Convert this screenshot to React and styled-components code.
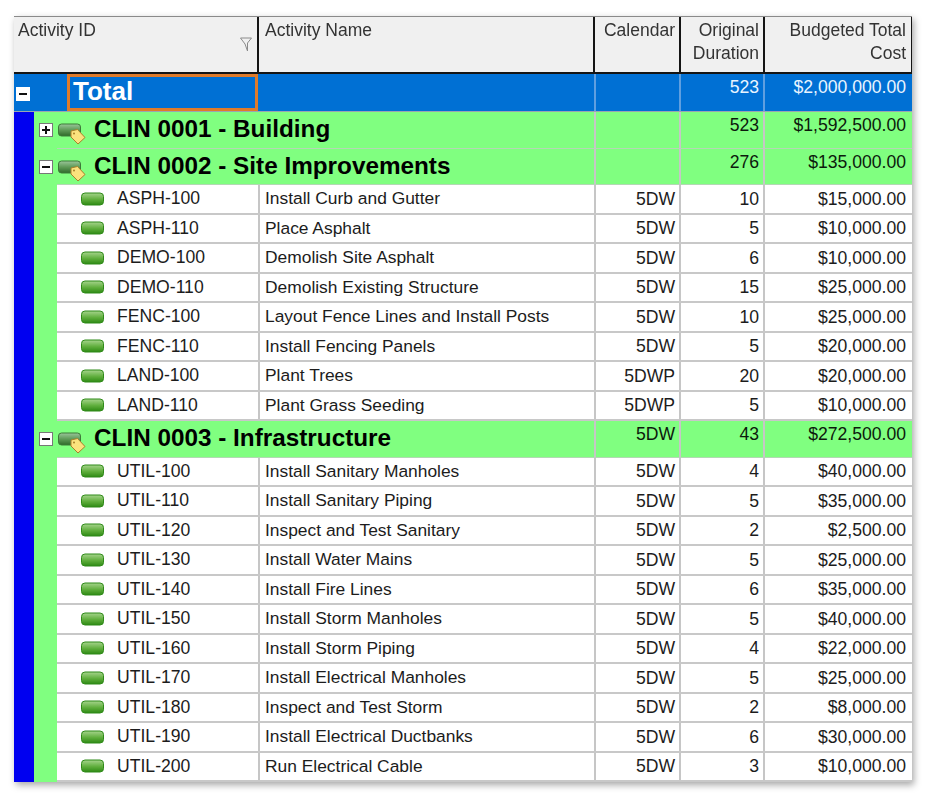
import styled, { createGlobalStyle } from "styled-components";

const GlobalStyle = createGlobalStyle`
  html, body {
    margin: 0;
    padding: 0;
    background: #ffffff;
  }
  body {
    font-family: "Liberation Sans", Arial, sans-serif;
    color: #1c1c1c;
  }
`;

const Page = styled.div`
  width: 928px;
  height: 793px;
  padding: 16px 16px 0 14px;
  box-sizing: border-box;
`;

const Panel = styled.div`
  width: 898px;
  background: #ffffff;
  box-shadow: 2px 3px 7px rgba(0, 0, 0, 0.35);
  filter: blur(0.3px);
`;

const HeaderRow = styled.div`
  display: grid;
  grid-template-columns: 245px 336px 86px 84px 1fr;
  height: 57.5px;
  background: #f0f0f0;
  border-top: 1px solid #8a8a8a;
  border-bottom: 2px solid #141414;
  box-sizing: border-box;
`;

const HeaderCell = styled.div`
  position: relative;
  padding: 2px 4px 0 ${(p) => p.$left || 4}px;
  font-size: 17.5px;
  line-height: 23px;
  color: #333333;
  text-align: ${(p) => (p.$right ? "right" : "left")};
  border-right: 2px solid #141414;
  box-sizing: border-box;
  white-space: nowrap;
  &:last-child {
    padding-right: 5px;
    border-right: 1px solid #141414;
  }
`;

const FilterMark = styled.svg`
  position: absolute;
  right: 5px;
  top: 20px;
`;

const TotalRowWrap = styled.div`
  display: grid;
  grid-template-columns: 580px 85px 84px 1fr;
  height: 38.5px;
  background: #0070d4;
  color: #e8f4ff;
  border-bottom: 1px solid #9aa6b0;
  box-sizing: border-box;
`;

const TotalName = styled.div`
  display: flex;
  align-items: center;
  padding-left: 2px;
`;

const TotalLabel = styled.div`
  width: 191px;
  height: 37px;
  margin-left: 37px;
  padding-left: 3px;
  border: 3px solid #e07b2a;
  box-sizing: border-box;
  font-size: 26px;
  font-weight: bold;
  line-height: 28px;
  color: #ffffff;
`;

const Toggle = styled.div`
  width: 14px;
  height: 14px;
  flex: none;
  position: relative;
  margin-top: ${(p) => p.$offset || 0}px;
  background: #ffffff;
  border: 1px solid ${(p) => (p.$plain ? "#777777" : "#ffffff")};
  box-sizing: border-box;
  &::before {
    content: "";
    position: absolute;
    left: 2px;
    right: 2px;
    top: 5px;
    height: 2px;
    background: #111111;
  }
  ${(p) =>
    p.$plus &&
    `&::after {
      content: "";
      position: absolute;
      top: 2px;
      bottom: 2px;
      left: 5px;
      width: 2px;
      background: #111111;
    }`}
`;

const NumCell = styled.div`
  font-size: 17.6px;
  text-align: right;
  padding: ${(p) => (p.$top ? "1px" : "0")} 4px 0 4px;
  border-left: 2px solid ${(p) => p.$line || "#c6c6c6"};
  box-sizing: border-box;
  display: ${(p) => (p.$top ? "block" : "flex")};
  align-items: center;
  justify-content: flex-end;
  line-height: 24px;
  white-space: nowrap;
  &:last-child {
    padding-right: 6px;
  }
`;

const Body = styled.div`
  border-left: 20px solid #0000f0;
`;

const Group = styled.div`
  background: #80ff80;
`;

const GroupRow = styled.div`
  display: grid;
  grid-template-columns: 560px 85px 84px 1fr;
  height: 36.5px;
  color: #0c1a0c;
`;

const GroupName = styled.div`
  position: relative;
  display: flex;
  align-items: flex-start;
  padding: 11px 0 0 5px;
  &::after {
    content: "";
    position: absolute;
    left: 23px;
    right: 0;
    bottom: 0;
    height: 1px;
    background: #b4d8b4;
  }
`;

const GroupLabel = styled.div`
  margin: -9px 0 0 8px;
  font-size: 24.3px;
  font-weight: bold;
  line-height: 30px;
  color: #000000;
  white-space: nowrap;
`;

const GroupCell = styled(NumCell)`
  border-bottom: 1px solid #b4d8b4;
`;

const ActivityRow = styled.div`
  display: grid;
  grid-template-columns: 201px 336px 85px 84px 1fr;
  height: 29.5px;
  margin-left: 23px;
  background: #ffffff;
  border-bottom: 2px solid #c8c8c8;
  box-sizing: border-box;
`;

const IdCell = styled.div`
  display: flex;
  align-items: center;
  padding-left: 24px;
  font-size: 17.6px;
`;

const IdText = styled.span`
  margin-left: 13px;
`;

const NameCell = styled.div`
  display: flex;
  align-items: center;
  padding-left: 5px;
  font-size: 17.4px;
  white-space: nowrap;
  border-left: 2px solid #c6c6c6;
  box-sizing: border-box;
`;

const GroupGlyph = styled.svg`
  flex: none;
  margin: -1px 0 0 5px;
`;

const ActivityGlyph = styled.svg`
  flex: none;
`;

function GroupIcon() {
  return (
    <GroupGlyph width="28" height="24" viewBox="0 0 28 24">
      <defs>
        <linearGradient id="groupBar" x1="0" y1="0" x2="0" y2="1">
          <stop offset="0" stopColor="#9bc59b" />
          <stop offset="0.5" stopColor="#5f9a58" />
          <stop offset="1" stopColor="#2f6a2a" />
        </linearGradient>
      </defs>
      <rect x="0.5" y="2" width="22" height="12" rx="3" fill="url(#groupBar)" stroke="#3d7a38" />
      <path d="M13 9 L19.5 7.5 L27 15.5 L20 22 L13 15 Z" fill="#fbe27d" stroke="#a8802a" strokeWidth="1" />
      <circle cx="16" cy="11.5" r="1" fill="#a8802a" />
    </GroupGlyph>
  );
}

function ActivityIcon() {
  return (
    <ActivityGlyph width="23" height="14" viewBox="0 0 23 14">
      <defs>
        <linearGradient id="activityBar" x1="0" y1="0" x2="0" y2="1">
          <stop offset="0" stopColor="#a6d48c" />
          <stop offset="0.55" stopColor="#5fae3c" />
          <stop offset="1" stopColor="#2e8a14" />
        </linearGradient>
      </defs>
      <rect x="0.5" y="1" width="22" height="12" rx="3.5" fill="url(#activityBar)" stroke="#2f8a18" />
    </ActivityGlyph>
  );
}

const site = [
  ["ASPH-100", "Install Curb and Gutter", "5DW", 10, "$15,000.00"],
  ["ASPH-110", "Place Asphalt", "5DW", 5, "$10,000.00"],
  ["DEMO-100", "Demolish Site Asphalt", "5DW", 6, "$10,000.00"],
  ["DEMO-110", "Demolish Existing Structure", "5DW", 15, "$25,000.00"],
  ["FENC-100", "Layout Fence Lines and Install Posts", "5DW", 10, "$25,000.00"],
  ["FENC-110", "Install Fencing Panels", "5DW", 5, "$20,000.00"],
  ["LAND-100", "Plant Trees", "5DWP", 20, "$20,000.00"],
  ["LAND-110", "Plant Grass Seeding", "5DWP", 5, "$10,000.00"],
];

const infra = [
  ["UTIL-100", "Install Sanitary Manholes", "5DW", 4, "$40,000.00"],
  ["UTIL-110", "Install Sanitary Piping", "5DW", 5, "$35,000.00"],
  ["UTIL-120", "Inspect and Test Sanitary", "5DW", 2, "$2,500.00"],
  ["UTIL-130", "Install Water Mains", "5DW", 5, "$25,000.00"],
  ["UTIL-140", "Install Fire Lines", "5DW", 6, "$35,000.00"],
  ["UTIL-150", "Install Storm Manholes", "5DW", 5, "$40,000.00"],
  ["UTIL-160", "Install Storm Piping", "5DW", 4, "$22,000.00"],
  ["UTIL-170", "Install Electrical Manholes", "5DW", 5, "$25,000.00"],
  ["UTIL-180", "Inspect and Test Storm", "5DW", 2, "$8,000.00"],
  ["UTIL-190", "Install Electrical Ductbanks", "5DW", 6, "$30,000.00"],
  ["UTIL-200", "Run Electrical Cable", "5DW", 3, "$10,000.00"],
];

function Activity({ row }) {
  return (
    <ActivityRow>
      <IdCell>
        <ActivityIcon />
        <IdText>{row[0]}</IdText>
      </IdCell>
      <NameCell>{row[1]}</NameCell>
      <NumCell>{row[2]}</NumCell>
      <NumCell>{row[3]}</NumCell>
      <NumCell>{row[4]}</NumCell>
    </ActivityRow>
  );
}

function GroupHeader({ name, plus, calendar, duration, cost }) {
  return (
    <GroupRow>
      <GroupName>
        <Toggle $plain $plus={plus} />
        <GroupIcon />
        <GroupLabel>{name}</GroupLabel>
      </GroupName>
      <GroupCell $top>{calendar}</GroupCell>
      <GroupCell $top>{duration}</GroupCell>
      <GroupCell $top>{cost}</GroupCell>
    </GroupRow>
  );
}

export default function App() {
  return (
    <>
      <GlobalStyle />
      <Page>
        <Panel>
          <HeaderRow>
            <HeaderCell>
              Activity ID
              <FilterMark width="12" height="15" viewBox="0 0 12 15">
                <path d="M0.5 1 H11.5 L7.5 6 V14 L5 7 Z" fill="none" stroke="#8a8a8a" />
              </FilterMark>
            </HeaderCell>
            <HeaderCell $left={6}>Activity Name</HeaderCell>
            <HeaderCell $right>Calendar</HeaderCell>
            <HeaderCell $right>
              Original
              <br />
              Duration
            </HeaderCell>
            <HeaderCell $right>
              Budgeted Total
              <br />
              Cost
            </HeaderCell>
          </HeaderRow>
          <TotalRowWrap>
            <TotalName>
              <Toggle $offset={4} />
              <TotalLabel>Total</TotalLabel>
            </TotalName>
            <NumCell $top $line="#5f9fe0" />
            <NumCell $top $line="#5f9fe0">523</NumCell>
            <NumCell $top $line="#5f9fe0">$2,000,000.00</NumCell>
          </TotalRowWrap>
          <Body>
            <Group>
              <GroupHeader name="CLIN 0001 - Building" plus duration="523" cost="$1,592,500.00" />
              <GroupHeader name="CLIN 0002 - Site Improvements" duration="276" cost="$135,000.00" />
              {site.map((row) => (
                <Activity key={row[0]} row={row} />
              ))}
              <GroupHeader name="CLIN 0003 - Infrastructure" calendar="5DW" duration="43" cost="$272,500.00" />
              {infra.map((row) => (
                <Activity key={row[0]} row={row} />
              ))}
            </Group>
          </Body>
        </Panel>
      </Page>
    </>
  );
}
